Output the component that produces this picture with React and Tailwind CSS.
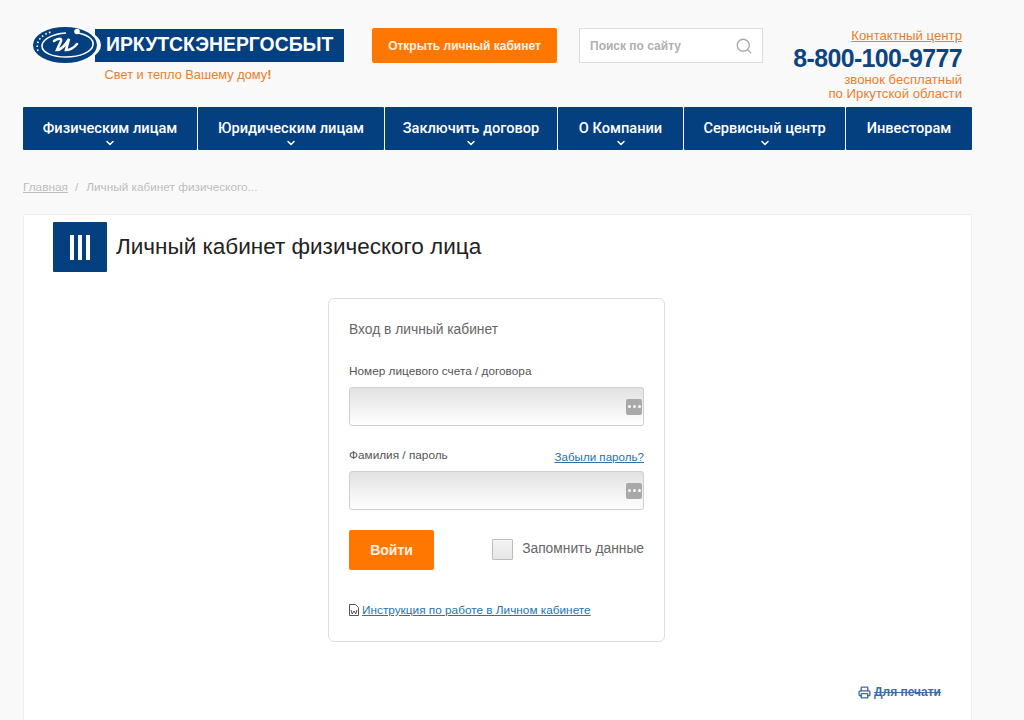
import { ChevronDown, Printer, Search } from "lucide-react";

const navItems = [
  { label: "Физическим лицам", width: "w-[174px]", arrow: true },
  { label: "Юридическим лицам", width: "w-[186px]", arrow: true },
  { label: "Заключить договор", width: "w-[172px]", arrow: true },
  { label: "О Компании", width: "w-[125px]", arrow: true },
  { label: "Сервисный центр", width: "w-[161px]", arrow: true },
  { label: "Инвесторам", width: "w-[126px]", arrow: false },
];

function Logo() {
  return (
    <div className="flex flex-col items-center w-[311px]">
      <div className="flex items-center h-[36px] w-full">
        <svg width="68" height="36" viewBox="0 0 68 36" className="shrink-0 relative z-10">
          <ellipse cx="34" cy="18" rx="34" ry="18" fill="#ffffff" />
          <ellipse cx="32" cy="18" rx="32" ry="18" fill="#043f80" />
          <path d="M5 24C2 15 8 7 20 4.500" fill="none" stroke="#ffffff" strokeWidth="1.6" strokeDasharray="1.600 2.400" />
          <path d="M42 5.500C54 7 61 12 60 18c-1 7-13 12-27 12C20 30 9 26 9 19c0-6 9-12 24-13" fill="none" stroke="#ffffff" strokeWidth="1.600" />
          <circle cx="44" cy="4.500" r="2.800" fill="#ffffff" />
          <path d="M21 14c4-3 8-3 7 0l-4 9c4 0 9-6 12-11l-3 11c3 0 8-2 11-6" fill="none" stroke="#ffffff" strokeWidth="2.600" strokeLinecap="round" />
        </svg>
        <div className="-ml-[6px] flex-1 h-[33px] bg-[#043f80] flex items-center pl-[11px] text-white font-bold text-[19.4px] font-['Liberation_Sans',sans-serif] whitespace-nowrap">
          ИРКУТСКЭНЕРГОСБЫТ
        </div>
      </div>
      <p className="mt-[3px] ml-[-1px] text-[12.8px] leading-[18px] text-[#ed7d2b]">
        Свет и тепло Вашему дому<b>!</b>
      </p>
    </div>
  );
}

function Header() {
  return (
    <header className="flex items-start h-[107px] pt-[27px] pl-[33px] pr-[62px]">
      <Logo />
      <button className="ml-[28px] mt-[1px] w-[185px] h-[35px] rounded-[2px] bg-[#ff7700] text-white/90 text-[12px] font-bold">
        Открыть личный кабинет
      </button>
      <div className="ml-[22px] mt-[1px] w-[184px] h-[35px] border border-[#dcdcdc] bg-white flex items-center justify-between pl-[10px] pr-[9px] text-[12px] font-bold text-[#b0b0b0]">
        <span>Поиск по сайту</span>
        <Search size={18} strokeWidth={1.75} className="text-[#a8a8a8]" />
      </div>
      <div className="ml-auto text-right text-[13.2px] leading-[14px] text-[#ed7d2b] whitespace-nowrap">
        <a className="underline block mt-[2px]">Контактный центр</a>
        <p className="mt-[1px] text-[24.9px] leading-[28px] font-bold tracking-[-0.6px] text-[#0d4480]">8-800-100-9777</p>
        <p className="mt-[1px]">звонок бесплатный</p>
        <p>по Иркутской области</p>
      </div>
    </header>
  );
}

function Nav() {
  return (
    <nav className="flex ml-[23px] w-[949px] h-[43px] gap-[1px]">
      {navItems.map((item) => (
        <a
          key={item.label}
          className={`${item.width} relative bg-[#043f80] rounded-[1px] flex justify-center pt-[13px] text-white text-[14.6px] leading-[16px] font-medium font-['Roboto',sans-serif] whitespace-nowrap`}
        >
          {item.label}
          {item.arrow && (
            <ChevronDown size={12} strokeWidth={3} className="absolute left-1/2 -translate-x-1/2 bottom-[1px]" />
          )}
        </a>
      ))}
    </nav>
  );
}

function Field({ label, extra }) {
  return (
    <div>
      <div className="flex justify-between items-end h-[16px] text-[11.8px] leading-[16px] text-[#555555]">
        <span>{label}</span>
        {extra}
      </div>
      <div className="mt-[8px] h-[39px] rounded-[3px] border border-[#cfcfcf] bg-gradient-to-b from-[#e2e2e2] to-white flex items-center justify-end pr-[1px]">
        <div className="w-[16px] h-[16px] rounded-[2px] bg-[#a9a9a9] flex items-center justify-center gap-[2px]">
          <span className="w-[3px] h-[3px] rounded-full bg-white" />
          <span className="w-[3px] h-[3px] rounded-full bg-white" />
          <span className="w-[3px] h-[3px] rounded-full bg-white" />
        </div>
      </div>
    </div>
  );
}

function LoginForm() {
  return (
    <div className="ml-[304px] mt-[26px] w-[337px] h-[344px] rounded-[6px] border border-[#dddddd] bg-white px-[20px] pt-[22px]">
      <h2 className="text-[13.8px] leading-[18px] text-[#666666]">Вход в личный кабинет</h2>
      <div className="mt-[24px]">
        <Field label="Номер лицевого счета / договора" />
      </div>
      <div className="mt-[21px]">
        <Field
          label="Фамилия / пароль"
          extra={<a className="underline text-[#2a72ad] text-[11.6px] translate-y-[2px]">Забыли пароль?</a>}
        />
      </div>
      <div className="mt-[20px] flex items-center justify-between">
        <button className="w-[85px] h-[40px] rounded-[2px] bg-[#ff7700] text-white/90 text-[14px] font-bold">Войти</button>
        <label className="flex items-center gap-[9px] -mt-[2px] text-[13.8px] text-[#666666]">
          <span className="w-[21px] h-[21px] border border-[#bdbdbd] rounded-[1px] bg-gradient-to-b from-[#f4f4f4] to-[#e6e6e6]" />
          Запомнить данные
        </label>
      </div>
      <div className="mt-[32px] flex items-center gap-[3px] text-[11.8px] leading-[16px]">
        <svg width="10" height="12" viewBox="0 0 10 12" className="shrink-0">
          <path d="M.5.5h6l3 3v8h-9z" fill="#ffffff" stroke="#555555" />
          <path d="M2 6l1.200 4L5 7l1.800 3L8 6" fill="none" stroke="#555555" strokeWidth="1" />
        </svg>
        <a className="underline text-[#2a72ad]">Инструкция по работе в Личном кабинете</a>
      </div>
    </div>
  );
}

export default function App() {
  return (
    <div className="h-[720px] overflow-hidden bg-[#f9f9f9] font-['Liberation_Sans',sans-serif]">
      <Header />
      <Nav />
      <div className="ml-[23px] mt-[30px] h-[16px] flex items-center text-[11.8px] text-[#bdbdbd]">
        <a className="underline">Главная</a>
        <span className="ml-[7px] mr-[8px]">/</span>
        <span>Личный кабинет физического...</span>
      </div>
      <main className="ml-[23px] mt-[18px] w-[949px] h-[520px] border border-[#eeeeee] rounded-[2px] bg-white">
        <div className="flex items-center pl-[29px] pt-[7px]">
          <div className="w-[54px] h-[50px] rounded-[1px] bg-[#043f80] flex items-center justify-center gap-[4px]">
            <span className="w-[4px] h-[25px] bg-white" />
            <span className="w-[4px] h-[25px] bg-white" />
            <span className="w-[4px] h-[25px] bg-white" />
          </div>
          <h1 className="ml-[9px] text-[22.5px] leading-[28px] -mt-[1px] text-[#222222]">Личный кабинет физического лица</h1>
        </div>
        <LoginForm />
        <a className="mt-[43px] mr-[30px] flex items-center justify-end gap-[3px] text-[12px] leading-[14px] font-bold text-[#3b6ea5] line-through">
          <Printer size={13} strokeWidth={2.5} />
          Для печати
        </a>
      </main>
    </div>
  );
}
